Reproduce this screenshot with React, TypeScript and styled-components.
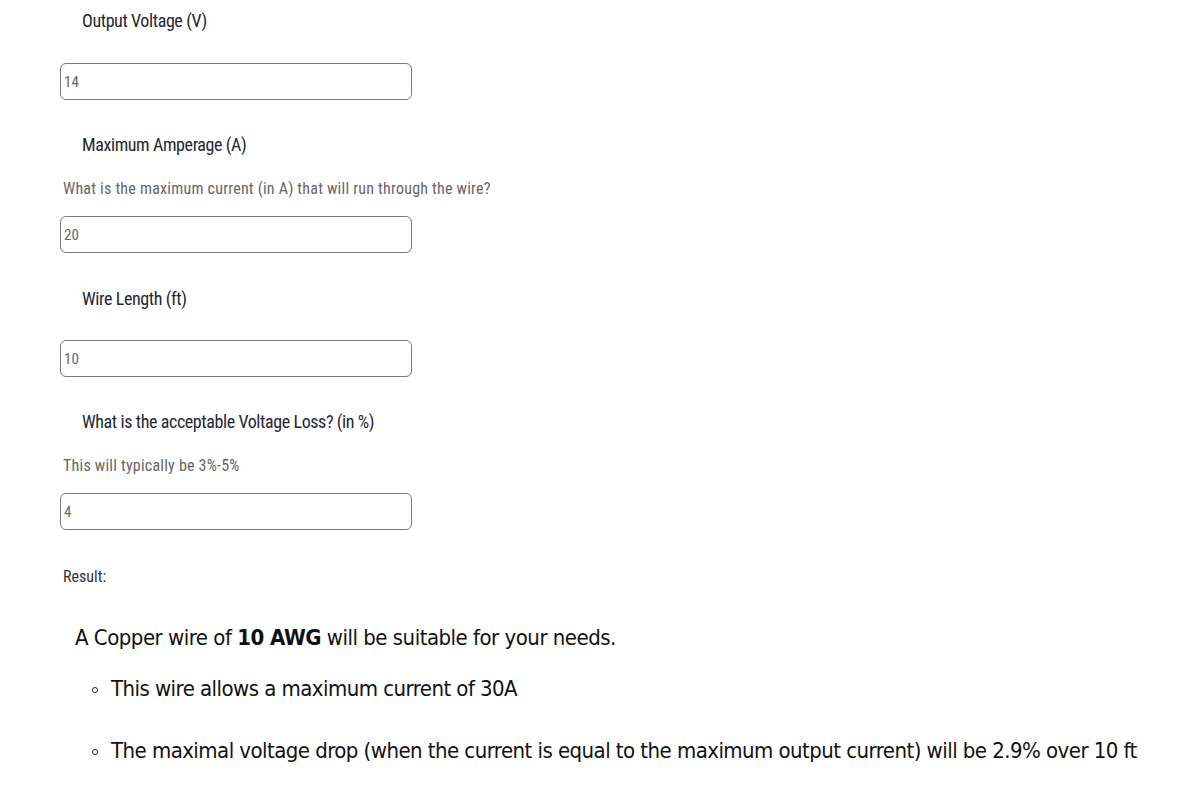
import React from "react";
import styled, { createGlobalStyle } from "styled-components";

const GlobalStyle = createGlobalStyle`
  html, body { margin: 0; padding: 0; background: #ffffff; }
  body { font-family: 'Roboto Condensed', 'Liberation Sans', sans-serif; }
`;

const Page = styled.main`
  display: flex;
  flex-direction: column;
  align-items: flex-start;
  padding: 9px 0 0 60px;
`;

const Field = styled.section<{ $gap: number }>`
  display: flex;
  flex-direction: column;
  align-items: flex-start;
  margin-top: ${(p) => p.$gap}px;
`;

const Label = styled.label<{ $after: number }>`
  font-family: 'Roboto Condensed', sans-serif;
  font-size: 18px;
  letter-spacing: -0.4px;
  line-height: 24px;
  color: #262633;
  margin-left: 22px;
  margin-bottom: ${(p) => p.$after}px;
`;

const Hint = styled.p`
  margin: -12px 0 16px 3px;
  font-family: 'Roboto Condensed', sans-serif;
  font-size: 16px;
  letter-spacing: 0.22px;
  line-height: 22px;
  color: #666666;
`;

const Input = styled.input`
  box-sizing: border-box;
  width: 352px;
  height: 37px;
  margin: 0;
  padding: 0 3px;
  border: 1px solid #7a7a7a;
  border-radius: 6px;
  font-family: 'Roboto Condensed', sans-serif;
  font-size: 15px;
  color: #666666;
  background: #ffffff;
  outline: none;
`;

const ResultTitle = styled.div`
  margin: 36px 0 0 3px;
  font-family: 'Roboto Condensed', sans-serif;
  font-size: 16px;
  line-height: 22px;
  color: #333333;
`;

const Sentence = styled.p`
  margin: 35px 0 0 15px;
  font-family: 'DejaVu Sans Condensed', 'DejaVu Sans', sans-serif;
  font-size: 22px;
  letter-spacing: -0.5px;
  line-height: 30px;
  color: #111111;
  white-space: nowrap;

  strong {
    font-weight: 700;
  }
`;

const List = styled.ul`
  list-style: none;
  margin: 0;
  padding: 0;
`;

const Item = styled.li<{ $gap: number }>`
  display: flex;
  align-items: center;
  gap: 13px;
  margin-top: ${(p) => p.$gap}px;
  padding-left: 32px;
  font-family: 'DejaVu Sans Condensed', 'DejaVu Sans', sans-serif;
  font-size: 22px;
  letter-spacing: -0.55px;
  line-height: 30px;
  color: #111111;
  white-space: nowrap;
`;

const Bullet = styled.span`
  box-sizing: border-box;
  flex: none;
  width: 6px;
  height: 6px;
  margin-top: 2px;
  border: 1px solid #222222;
  border-radius: 50%;
`;

type FieldDef = {
  label: string;
  hint?: string;
  value: string;
  gap: number;
  after: number;
};

const fields: FieldDef[] = [
  { label: "Output Voltage (V)", value: "14", gap: 0, after: 30 },
  {
    label: "Maximum Amperage (A)",
    hint: "What is the maximum current (in A) that will run through the wire?",
    value: "20",
    gap: 33,
    after: 33,
  },
  { label: "Wire Length (ft)", value: "10", gap: 34, after: 29 },
  {
    label: "What is the acceptable Voltage Loss? (in %)",
    hint: "This will typically be 3%-5%",
    value: "4",
    gap: 33,
    after: 33,
  },
];

export default function App() {
  return (
    <>
      <GlobalStyle />
      <Page>
        {fields.map((f) => (
          <Field key={f.label} $gap={f.gap}>
            <Label $after={f.after}>{f.label}</Label>
            {f.hint && <Hint>{f.hint}</Hint>}
            <Input type="text" defaultValue={f.value} />
          </Field>
        ))}
        <ResultTitle>Result:</ResultTitle>
        <Sentence>
          A Copper wire of <strong>10 AWG</strong> will be suitable for your needs.
        </Sentence>
        <List>
          <Item $gap={21}>
            <Bullet />
            This wire allows a maximum current of 30A
          </Item>
          <Item $gap={32}>
            <Bullet />
            The maximal voltage drop (when the current is equal to the maximum output current) will be 2.9% over 10 ft
          </Item>
        </List>
      </Page>
    </>
  );
}
